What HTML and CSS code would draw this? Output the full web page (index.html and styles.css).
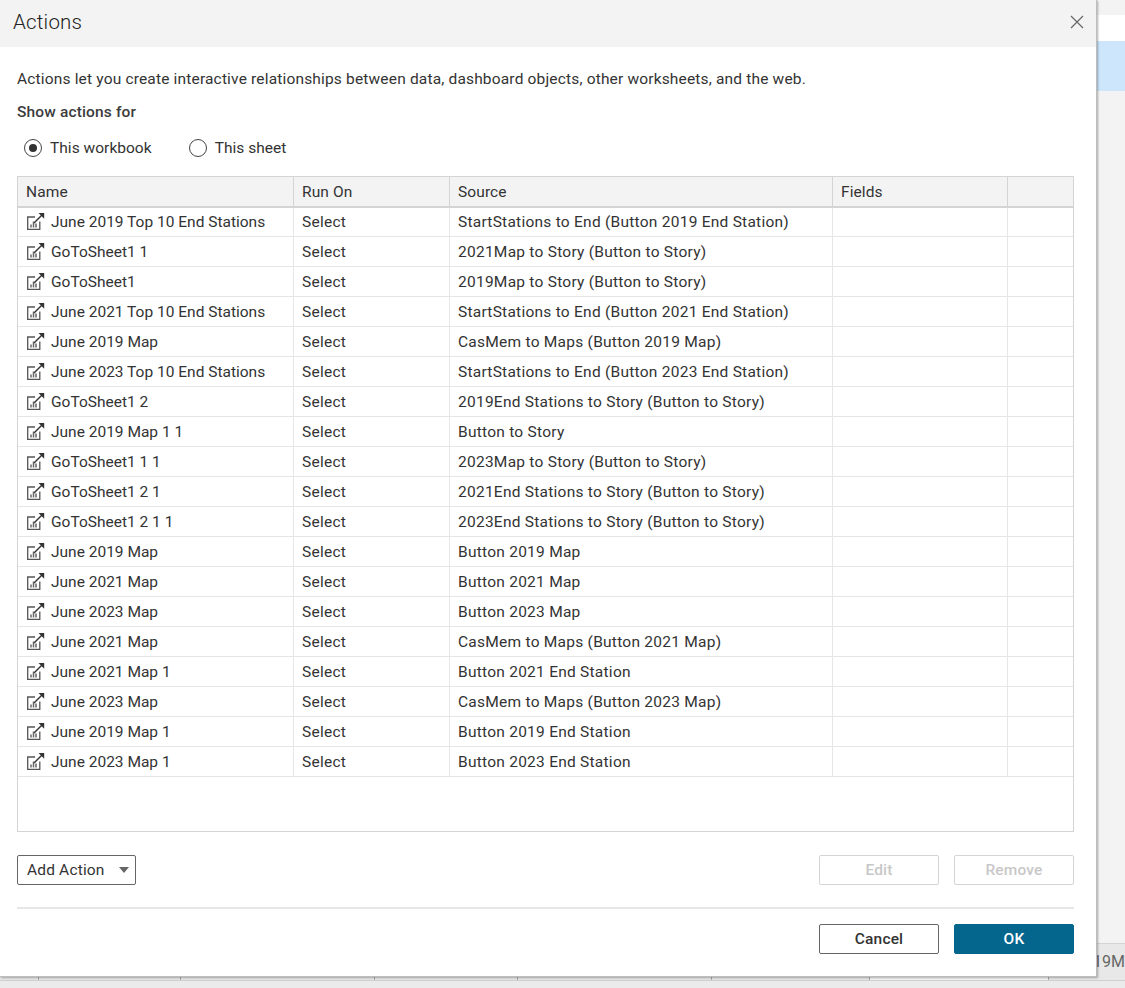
FILE: index.html
```html
<!DOCTYPE html>
<html lang="en">
<head>
<meta charset="utf-8">
<title>Actions</title>
<link rel="stylesheet" href="styles.css">
</head>
<body>
<svg class="defs" width="0" height="0" aria-hidden="true">
  <symbol id="act" viewBox="0 0 18 18">
    <path d="M8 5H.7V17.3H12.8V9.5" fill="none" stroke="#555" stroke-width="1.3"/>
    <path d="M7 11L15 3" fill="none" stroke="#333" stroke-width="1.5"/>
    <path d="M11.5 1H17.2V6.7Z" fill="#333"/>
    <path d="M4 15.5V12.5M6.5 15.5V9.5M9 15.5V11.5" fill="none" stroke="#666" stroke-width="1.5"/>
  </symbol>
</svg>
<div class="backdrop">
  <div class="bg-side">
    <div class="bg-top"></div>
    <div class="bg-white"></div>
    <div class="bg-blue"></div>
  </div>
  <div class="bg-status">
    <div class="cell w1"></div>
    <div class="cell w2"></div>
    <div class="cell w3"></div>
    <div class="cell w4"></div>
    <div class="cell w5"></div>
    <div class="cell w6"></div>
    <div class="cell w7 lit"></div>
    <div class="cell w8">19M</div>
  </div>
</div>
<div class="dialog">
  <header class="title-bar">
    <h1 class="title">Actions</h1>
    <svg class="close" width="14" height="14" viewBox="0 0 14 14"><path d="M1 1L13 13M13 1L1 13" fill="none" stroke="#666" stroke-width="1.2"/></svg>
  </header>
  <div class="body">
    <p class="intro">Actions let you create interactive relationships between data, dashboard objects, other worksheets, and the web.</p>
    <p class="show">Show actions for</p>
    <div class="radios">
      <label class="radio"><span class="dot on"></span>This workbook</label>
      <label class="radio"><span class="dot"></span>This sheet</label>
    </div>
    <div class="table-box">
      <table class="grid">
        <colgroup><col class="c1"><col class="c2"><col class="c3"><col class="c4"><col class="c5"></colgroup>
        <thead><tr><th>Name</th><th>Run On</th><th>Source</th><th>Fields</th><th></th></tr></thead>
        <tbody>
          <tr><td class="name"><svg class="ic"><use href="#act"/></svg>June 2019 Top 10 End Stations</td><td>Select</td><td>StartStations to End (Button 2019 End Station)</td><td></td><td></td></tr>
          <tr><td class="name"><svg class="ic"><use href="#act"/></svg>GoToSheet1 1</td><td>Select</td><td>2021Map to Story (Button to Story)</td><td></td><td></td></tr>
          <tr><td class="name"><svg class="ic"><use href="#act"/></svg>GoToSheet1</td><td>Select</td><td>2019Map to Story (Button to Story)</td><td></td><td></td></tr>
          <tr><td class="name"><svg class="ic"><use href="#act"/></svg>June 2021 Top 10 End Stations</td><td>Select</td><td>StartStations to End (Button 2021 End Station)</td><td></td><td></td></tr>
          <tr><td class="name"><svg class="ic"><use href="#act"/></svg>June 2019 Map</td><td>Select</td><td>CasMem to Maps (Button 2019 Map)</td><td></td><td></td></tr>
          <tr><td class="name"><svg class="ic"><use href="#act"/></svg>June 2023 Top 10 End Stations</td><td>Select</td><td>StartStations to End (Button 2023 End Station)</td><td></td><td></td></tr>
          <tr><td class="name"><svg class="ic"><use href="#act"/></svg>GoToSheet1 2</td><td>Select</td><td>2019End Stations to Story (Button to Story)</td><td></td><td></td></tr>
          <tr><td class="name"><svg class="ic"><use href="#act"/></svg>June 2019 Map 1 1</td><td>Select</td><td>Button to Story</td><td></td><td></td></tr>
          <tr><td class="name"><svg class="ic"><use href="#act"/></svg>GoToSheet1 1 1</td><td>Select</td><td>2023Map to Story (Button to Story)</td><td></td><td></td></tr>
          <tr><td class="name"><svg class="ic"><use href="#act"/></svg>GoToSheet1 2 1</td><td>Select</td><td>2021End Stations to Story (Button to Story)</td><td></td><td></td></tr>
          <tr><td class="name"><svg class="ic"><use href="#act"/></svg>GoToSheet1 2 1 1</td><td>Select</td><td>2023End Stations to Story (Button to Story)</td><td></td><td></td></tr>
          <tr><td class="name"><svg class="ic"><use href="#act"/></svg>June 2019 Map</td><td>Select</td><td>Button 2019 Map</td><td></td><td></td></tr>
          <tr><td class="name"><svg class="ic"><use href="#act"/></svg>June 2021 Map</td><td>Select</td><td>Button 2021 Map</td><td></td><td></td></tr>
          <tr><td class="name"><svg class="ic"><use href="#act"/></svg>June 2023 Map</td><td>Select</td><td>Button 2023 Map</td><td></td><td></td></tr>
          <tr><td class="name"><svg class="ic"><use href="#act"/></svg>June 2021 Map</td><td>Select</td><td>CasMem to Maps (Button 2021 Map)</td><td></td><td></td></tr>
          <tr><td class="name"><svg class="ic"><use href="#act"/></svg>June 2021 Map 1</td><td>Select</td><td>Button 2021 End Station</td><td></td><td></td></tr>
          <tr><td class="name"><svg class="ic"><use href="#act"/></svg>June 2023 Map</td><td>Select</td><td>CasMem to Maps (Button 2023 Map)</td><td></td><td></td></tr>
          <tr><td class="name"><svg class="ic"><use href="#act"/></svg>June 2019 Map 1</td><td>Select</td><td>Button 2019 End Station</td><td></td><td></td></tr>
          <tr><td class="name"><svg class="ic"><use href="#act"/></svg>June 2023 Map 1</td><td>Select</td><td>Button 2023 End Station</td><td></td><td></td></tr>
        </tbody>
      </table>
    </div>
    <div class="action-row">
      <button class="btn add" type="button">Add Action<span class="caret"></span></button>
      <div class="btn-pair">
        <button class="btn wide off" type="button">Edit</button>
        <button class="btn wide off" type="button">Remove</button>
      </div>
    </div>
    <div class="rule"></div>
    <div class="footer-row">
      <button class="btn wide cancel" type="button">Cancel</button>
      <button class="btn wide ok" type="button">OK</button>
    </div>
  </div>
</div>
</body>
</html>
```

FILE: styles.css
```css
* { box-sizing: border-box; }
html, body { margin: 0; height: 100%; }
body {
  position: relative;
  width: 1125px;
  height: 988px;
  overflow: hidden;
  font-family: Roboto, "Liberation Sans", sans-serif;
  font-size: 15.5px;
  letter-spacing: .17px;
  color: #333;
  background: #ebebeb;
}
.defs { position: absolute; }

.backdrop { display: flex; flex-direction: column; height: 988px; }
.bg-side { height: 943px; padding-left: 1097px; background: #f3f3f3; }
.bg-top { height: 15px; }
.bg-white { height: 26px; background: #fff; }
.bg-blue { height: 50px; background: #cde6fb; }
.bg-status {
  display: flex;
  height: 38px;
  background: #e8e8e8;
  border-top: 1px solid #d4d4d4;
  border-bottom: 1px solid #cfcfcf;
}
.cell { border-right: 1px solid #aaa; }
.w1 { width: 39px; }
.w2 { width: 142px; }
.w3 { width: 194px; }
.w4 { width: 143px; }
.w5 { width: 194px; }
.w6 { width: 158px; }
.w7 { width: 179px; }
.w8 {
  flex: 1;
  border-right: 0;
  overflow: hidden;
  text-align: right;
  white-space: nowrap;
  font-size: 16px;
  letter-spacing: 0;
  line-height: 36px;
  color: #666;
}
.lit { background: #f4f4f4; }

.dialog {
  position: absolute;
  left: 0;
  top: 0;
  width: 1097px;
  height: 977px;
  background: #fff;
  border-right: 1px solid #bdbdbd;
  border-bottom: 1px solid #bdbdbd;
  box-shadow: 1px 1px 2px rgba(0, 0, 0, .3);
}
.title-bar {
  display: flex;
  align-items: center;
  justify-content: space-between;
  height: 47px;
  padding: 0 12px 4px 13px;
  background: #f3f3f3;
}
.title { margin: 0; font-size: 20.5px; font-weight: 300; letter-spacing: .2px; color: #222; }
.close { display: block; }

.body { padding: 0 22px 0 17px; }
.intro { margin: 0; padding-top: 22px; line-height: 20px; }
.show { margin: 0; padding-top: 13px; line-height: 20px; font-weight: 500; letter-spacing: .15px; color: #3c3c3c; }
.radios { display: flex; gap: 37px; padding: 16px 0 0 7px; height: 54px; letter-spacing: .03px; }
.radio { display: flex; align-items: center; gap: 8px; height: 20px; }
.dot {
  position: relative;
  width: 18px;
  height: 18px;
  border: 1px solid #444;
  border-radius: 50%;
}
.dot.on::after {
  content: "";
  position: absolute;
  left: 4px;
  top: 4px;
  width: 8px;
  height: 8px;
  border-radius: 50%;
  background: #333;
}

.table-box {
  width: 1057px;
  height: 656px;
  border: 1px solid #d4d4d4;
}
.grid { border-collapse: separate; border-spacing: 0; table-layout: fixed; width: 1055px; }
.c1 { width: 276px; }
.c2 { width: 156px; }
.c3 { width: 383px; }
.c4 { width: 175px; }
.c5 { width: 65px; }
.grid th {
  height: 31px;
  padding: 0 8px;
  text-align: left;
  font-weight: 400;
  letter-spacing: .1px;
  background: #f3f3f3;
  border-right: 1px solid #d4d4d4;
  border-bottom: 2px solid #d4d4d4;
}
.grid th:last-child, .grid td:last-child { border-right: 0; }
.grid td {
  height: 30px;
  padding: 0 8px;
  white-space: nowrap;
  letter-spacing: .25px;
  border-right: 1px solid #e6e6e6;
  border-bottom: 1px solid #e6e6e6;
}
.grid tbody tr:first-child td { height: 29px; padding-bottom: 1px; }
.grid .name { letter-spacing: 0; }
.ic { width: 18px; height: 18px; margin: -4px 6px -4px 1px; vertical-align: 1px; }

.action-row { display: flex; justify-content: space-between; padding-top: 23px; width: 1057px; }
.btn-pair { display: flex; gap: 15px; }
.btn {
  height: 30px;
  padding: 0 0 1px;
  font: inherit;
  letter-spacing: inherit;
  color: #333;
  background: #fff;
  border: 1px solid #666;
  border-radius: 2px;
}
.add {
  display: flex;
  align-items: center;
  justify-content: space-between;
  width: 119px;
  padding: 0 6px 1px 9px;
}
.caret {
  width: 0;
  height: 0;
  border-left: 5.5px solid transparent;
  border-right: 5.5px solid transparent;
  border-top: 6px solid #666;
}
.wide { width: 120px; font-weight: 500; }
.off { color: #c8c8c8; border-color: #d4d4d4; }
.rule { width: 1057px; margin-top: 22px; border-top: 2px solid #e6e6e6; }
.footer-row { display: flex; justify-content: flex-end; gap: 15px; width: 1057px; padding-top: 15px; }
.ok { color: #fff; background: #05668d; border-color: #05668d; }
```
